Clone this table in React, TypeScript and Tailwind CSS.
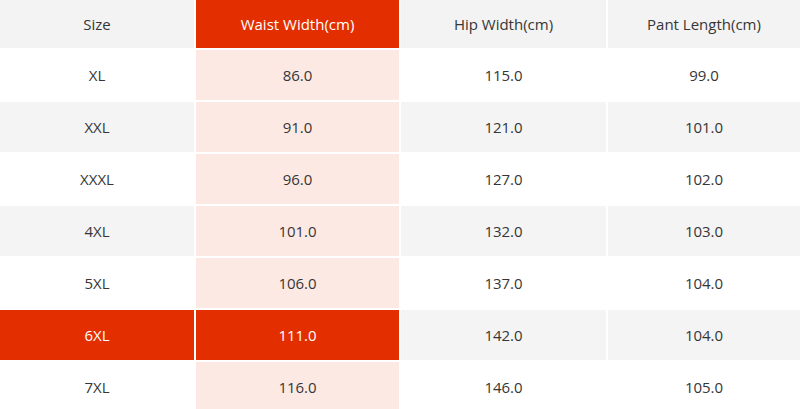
const headers = ["Size", "Waist Width(cm)", "Hip Width(cm)", "Pant Length(cm)"];

const rows = [
  ["XL", "86.0", "115.0", "99.0"],
  ["XXL", "91.0", "121.0", "101.0"],
  ["XXXL", "96.0", "127.0", "102.0"],
  ["4XL", "101.0", "132.0", "103.0"],
  ["5XL", "106.0", "137.0", "104.0"],
  ["6XL", "111.0", "142.0", "104.0"],
  ["7XL", "116.0", "146.0", "105.0"],
];

// highlighted size and measurement
const ACTIVE_ROW = 5;
const ACTIVE_COL = 1;

export default function App() {
  return (
    <div
      className="w-[800px] h-[409px] overflow-hidden bg-white text-[15px] text-[#363636]"
      style={{ fontFamily: '"Open Sans", "Noto Sans", sans-serif' }}
    >
      <div className="grid grid-cols-[194px_203px_205px_1fr] grid-rows-[48px] auto-rows-[50px] gap-x-[2px] gap-y-[2px]">
        {headers.map((h, i) => (
          <div
            key={h}
            className={`flex items-center justify-center ${
              i === ACTIVE_COL ? "bg-[#e32e00] text-white" : "bg-[#f3f3f3]"
            }`}
          >
            {h}
          </div>
        ))}
        {rows.map((row, r) =>
          row.map((cell, c) => {
            let cls = r % 2 === 1 ? "bg-[#f4f4f4]" : "bg-white";
            if (c === ACTIVE_COL) cls = "bg-[#fde9e4]";
            if (r === ACTIVE_ROW && c <= ACTIVE_COL) cls = "bg-[#e32e00] text-white";
            return (
              <div key={`${r}-${c}`} className={`flex items-center justify-center ${cls}`}>
                {cell}
              </div>
            );
          })
        )}
      </div>
    </div>
  );
}
